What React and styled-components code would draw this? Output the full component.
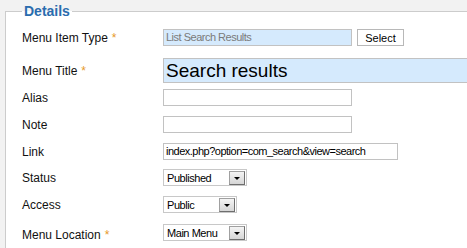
import React from "react";
import styled, { createGlobalStyle } from "styled-components";

const Global = createGlobalStyle`
  html, body { margin: 0; padding: 0; background: #f2f2f2; overflow: hidden; }
  body { font-family: "Liberation Sans", Arial, sans-serif; padding-top: 3px; }
`;

const Fieldset = styled.fieldset`
  margin: 0 0 0 5px;
  padding: 10px 0 20px 16px;
  width: 620px;
  border: 1px solid #cccccc;
  border-right: none;
  background: #ffffff;
  box-sizing: border-box;
  min-height: 260px;
`;

const Legend = styled.legend`
  font: bold 14px/16px "Liberation Sans", Arial, sans-serif;
  color: #2a6cae;
  padding: 0 2px;
  margin-left: 0;
`;

const Row = styled.div`
  display: flex;
  align-items: center;
  margin-top: ${(p) => p.$gap || 0}px;
  height: ${(p) => p.$h}px;
`;

const Label = styled.label`
  width: 141px;
  flex: none;
  font-size: 12px;
  color: #111;
  position: relative;
  top: ${(p) => p.$shift || 0}px;
`;

const Star = styled.span`
  color: #e69a2a;
  margin-left: 4px;
`;

const TextInput = styled.div`
  box-sizing: border-box;
  width: ${(p) => p.$w}px;
  height: ${(p) => p.$h || 17}px;
  border: 1px solid #c2c2c2;
  background: ${(p) => (p.$ro ? "#d5eafd" : "#ffffff")};
  color: ${(p) => (p.$muted ? "#7a7a7a" : "#000")};
  font-family: "Liberation Sans", Arial, sans-serif;
  font-size: ${(p) => p.$fs || 11}px;
  line-height: ${(p) => (p.$h || 17) - 2}px;
  padding-left: 2px;
  white-space: nowrap;
  overflow: hidden;
  flex: none;
  letter-spacing: ${(p) => (p.$ls !== undefined ? p.$ls : -0.5)}px;
`;

const Button = styled.button`
  margin-left: 5px;
  box-sizing: border-box;
  width: 47px;
  height: 17px;
  border: 1px solid #b8b8b8;
  background: #fff;
  font: 11px "Liberation Sans", Arial, sans-serif;
  color: #000;
  padding: 0;
`;

const Select = styled.div`
  box-sizing: border-box;
  display: flex;
  align-items: center;
  justify-content: space-between;
  width: ${(p) => p.$w}px;
  height: 17px;
  border: 1px solid #c8c8c8;
  background: #fff;
  font-family: "Liberation Sans", Arial, sans-serif;
  font-size: 11px;
  letter-spacing: -0.45px;
  padding: 0 1px 0 3px;
`;

const Arrow = styled.span`
  box-sizing: border-box;
  width: 16px;
  height: 14px;
  border: 1px solid #6e6e6e;
  border-top-color: #a0a0a0;
  border-left-color: #a0a0a0;
  background: linear-gradient(#f4f4f4, #d6d6d6);
  display: flex;
  align-items: center;
  justify-content: center;
  &::after {
    content: "";
    margin-top: 2px;
    border-left: 3.5px solid transparent;
    border-right: 3.5px solid transparent;
    border-top: 3.5px solid #000;
  }
`;

const Dropdown = ({ w, children }) => (
  <Select $w={w}>
    <span>{children}</span>
    <Arrow />
  </Select>
);

export default function App() {
  return (
    <>
      <Global />
      <Fieldset>
        <Legend>Details</Legend>
        <Row $h={17}>
          <Label>
            Menu Item Type<Star>*</Star>
          </Label>
          <TextInput $w={189} $ro $muted>
            List Search Results
          </TextInput>
          <Button>Select</Button>
        </Row>
        <Row $h={25} $gap={12}>
          <Label>
            Menu Title<Star>*</Star>
          </Label>
          <TextInput $w={340} $h={25} $ro $fs={19} $ls={0}>
            Search results
          </TextInput>
        </Row>
        <Row $h={17} $gap={6}>
          <Label>Alias</Label>
          <TextInput $w={189} />
        </Row>
        <Row $h={17} $gap={10}>
          <Label>Note</Label>
          <TextInput $w={189} />
        </Row>
        <Row $h={17} $gap={10}>
          <Label>Link</Label>
          <TextInput $w={235}>
            index.php?option=com_search&amp;view=search
          </TextInput>
        </Row>
        <Row $h={17} $gap={9}>
          <Label>Status</Label>
          <Dropdown w={84}>Published</Dropdown>
        </Row>
        <Row $h={17} $gap={10}>
          <Label>Access</Label>
          <Dropdown w={74}>Public</Dropdown>
        </Row>
        <Row $h={17} $gap={11}>
          <Label $shift={2}>
            Menu Location<Star>*</Star>
          </Label>
          <Dropdown w={84}>Main Menu</Dropdown>
        </Row>
      </Fieldset>
    </>
  );
}
